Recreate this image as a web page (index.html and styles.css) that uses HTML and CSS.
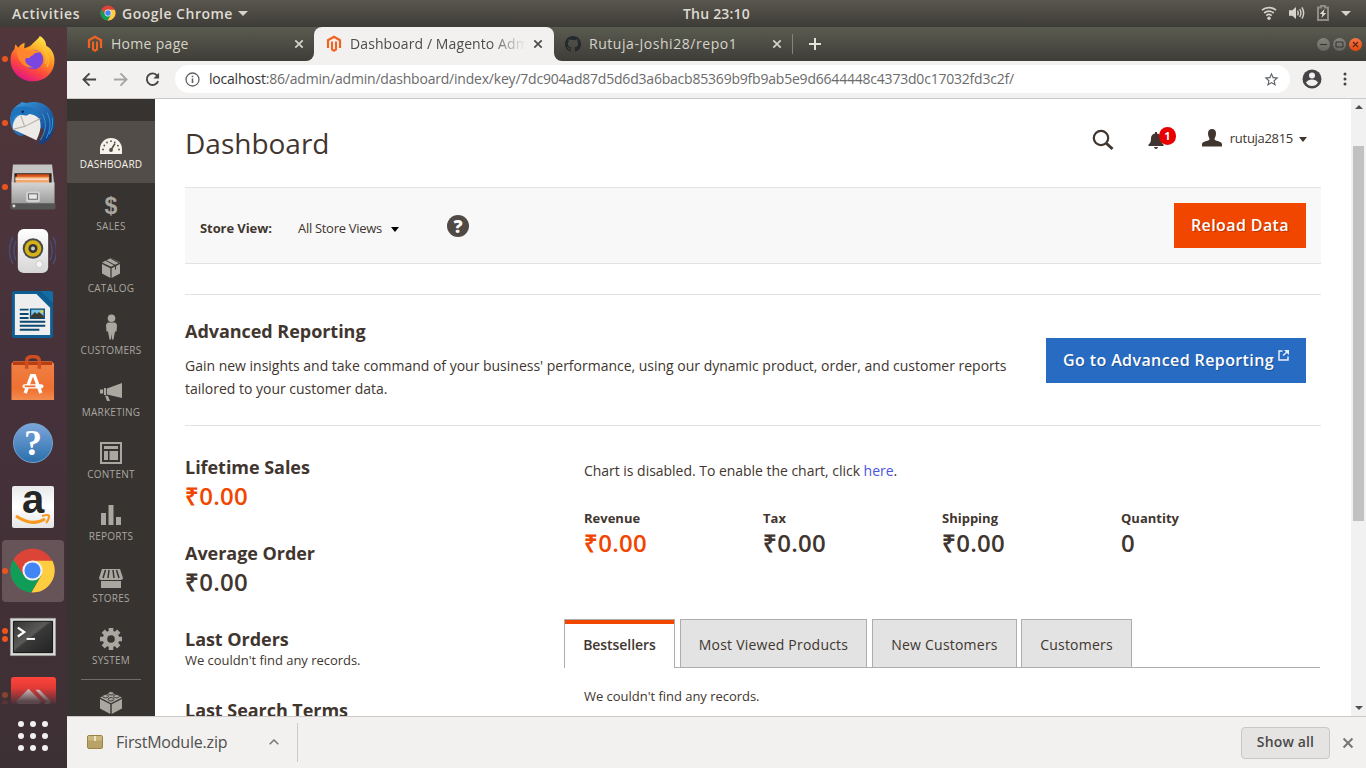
FILE: index.html
```html
<!DOCTYPE html>
<html lang="en">
<head>
<meta charset="utf-8">
<title>Dashboard / Magento Admin</title>
<link rel="stylesheet" href="styles.css">
</head>
<body>
<svg width="0" height="0" class="defs" aria-hidden="true">
  <defs>
    <symbol id="magento" viewBox="0 0 16 18"><path d="M2 13V5.2L8 1.8l6 3.4V13" fill="none" stroke="#f26322" stroke-width="2.2"/><path d="M6 6.500v8l2 1.200 2-1.200v-8" fill="none" stroke="#f26322" stroke-width="2.1"/></symbol>
    <symbol id="chrome" viewBox="0 0 48 48"><circle cx="24" cy="24" r="22.5" fill="#db4437"/><path d="M4.500 12.800A22.500 22.500 0 0 0 23 46.500L33 29 24 24 15 29Z" fill="#0f9d58"/><path d="M23 46.500A22.500 22.500 0 0 0 44.300 14H24l9 15Z" fill="#ffcd40"/><circle cx="24" cy="24" r="10.300" fill="#f1f1f1"/><circle cx="24" cy="24" r="8.200" fill="#4285f4"/></symbol>
    <symbol id="cross" viewBox="0 0 10 10"><path d="M1.300 1.300l7.400 7.400M8.700 1.300L1.300 8.700" stroke="currentColor" stroke-width="1.700"/></symbol>
    <linearGradient id="fox" x1=".8" y1="0" x2=".3" y2="1"><stop offset="0" stop-color="#fff44f"/><stop offset=".4" stop-color="#ff9a22"/><stop offset=".7" stop-color="#ff4a3c"/><stop offset="1" stop-color="#e0128a"/></linearGradient>
    <linearGradient id="bird" x1="0" y1="0" x2="1" y2="1"><stop offset="0" stop-color="#3aa0e4"/><stop offset="1" stop-color="#0c2f78"/></linearGradient>
    <linearGradient id="silver" x1="0" y1="0" x2="0" y2="1"><stop offset="0" stop-color="#d4d4d4"/><stop offset="1" stop-color="#9b9b9b"/></linearGradient>
    <linearGradient id="paper" x1="0" y1="0" x2="0" y2="1"><stop offset="0" stop-color="#fff"/><stop offset="1" stop-color="#d6d6d6"/></linearGradient>
    <linearGradient id="bag" x1="0" y1="0" x2="0" y2="1"><stop offset="0" stop-color="#ef8146"/><stop offset=".7" stop-color="#f0702f"/><stop offset="1" stop-color="#f38b50"/></linearGradient>
    <linearGradient id="screen" x1="0" y1="0" x2="1" y2="1"><stop offset="0" stop-color="#333"/><stop offset=".45" stop-color="#5a5a58"/><stop offset=".5" stop-color="#393939"/><stop offset="1" stop-color="#222"/></linearGradient>
    <linearGradient id="anyred" x1="0" y1="0" x2="0" y2="1"><stop offset="0" stop-color="#ff443c"/><stop offset=".25" stop-color="#e03a35"/><stop offset=".6" stop-color="#46323a"/><stop offset="1" stop-color="#46323a"/></linearGradient>
    <linearGradient id="anygrey" x1="0" y1="0" x2="0" y2="1"><stop offset="0" stop-color="#d5bcbc"/><stop offset=".75" stop-color="#5a474b"/></linearGradient>
  </defs>
</svg>

<header class="topbar">
  <span class="activities">Activities</span>
  <svg class="tb-chrome" viewBox="0 0 48 48"><use href="#chrome"/></svg>
  <span class="appname">Google Chrome</span>
  <i class="tri"></i>
  <span class="clock">Thu 23:10</span>
  <div class="indicators">
    <svg width="16" height="16" viewBox="0 0 16 16" fill="none" stroke="#d6d3cc"><path d="M1 5.200a10.500 10.500 0 0 1 14 0M3.200 8a7.300 7.300 0 0 1 9.600 0M5.300 10.600a4.200 4.200 0 0 1 5.400 0" stroke-width="1.700"/><circle cx="8" cy="13.300" r="1.700" fill="#d6d3cc" stroke="none"/></svg>
    <svg width="16" height="16" viewBox="0 0 16 16"><path d="M0 5.300h3.300L7 2v12l-3.700-3.300H0z" fill="#d6d3cc"/><path d="M8.500 5.600q1.500 2.400 0 4.800M10.700 4q2.500 4 0 8M12.900 2.300q3.600 5.700 0 11.400" fill="none" stroke="#d6d3cc" stroke-width="1.400"/></svg>
    <svg width="12" height="16" viewBox="0 0 12 16"><path d="M1 2.500h3V1h4v1.500h3V15H1z" fill="none" stroke="#8f8c85" stroke-width="2"/><path d="M7.500 4L2.800 9h2.600l-1 4 4.800-5H6.600z" fill="#dfdcd5"/></svg>
    <i class="tri"></i>
  </div>
</header>

<div class="desktop">
  <nav class="dock">
    <div class="dock-list">
      <div class="app"><i class="dot"></i>
        <svg viewBox="0 0 48 48"><path d="M31.500 1c5 2.800 6.300 6.700 6.500 10 6 3 9.200 9.500 8.300 17.500C45.200 39 36.500 47 25 47.200 12.500 47.400 2.200 38.500 1.600 26.500 1.300 20.500 3 17 5.500 14.500l1-5 3 3.500c2-3 4-4 6.500-5l-.5 5.500c5-1 7-2.500 9-5C27 6 30 4 31.500 1z" fill="url(#fox)"/><circle cx="25" cy="25" r="10" fill="#7b45e0"/><path d="M15 20c4-6 12-6 17-2-6-1-9 3-11 5-2 1-5 1-6-3z" fill="#ff9328"/><path d="M8 16c4-3 9-2 13 1 3 0 5 1 5 2-2 3-5 3-8 4-4 3 1 9 7 10-9 2-17-7-17-17z" fill="#ff862e"/><path d="M29 10c7 4 11 11 8 20M35 13q8 9 4 20" fill="none" stroke="#ffc537" stroke-width="1.500" opacity=".7"/></svg></div>
      <div class="app"><i class="dot"></i>
        <svg viewBox="0 0 48 48"><path d="M13 3l5 1c18-4 29 7 28.500 22C46 38 38 46 29 46.500c6-6 8-12 6-17L12 38C3 35 0 25 1.600 17 3 9 8 7 13 3z" fill="url(#bird)"/><path d="M4 31c-1-6 2-13 8-15 9-3 20 1 20 8 1 6-1 12-4 18z" fill="#edebe7"/><path d="M12 17l4 11 16-8M4 31l12-3" fill="none" stroke="#b9b3a8" stroke-width="1.200"/><path d="M2 18C2 7 11 7 19 8c7 1 11 5 13 11-4-3-7-5-11-4-4 4-8 0-13 1-3 1-4 5-5 9z" fill="#1e75bd"/><circle cx="14" cy="13" r="1.300" fill="#182454"/><path d="M34 15c5 10 4 17-2 27M39 14c4 9 4 16-1 26M44 19q2 9-3 17" stroke="#3698d4" stroke-width="1" fill="none"/></svg></div>
      <div class="app"><i class="dot"></i>
        <svg viewBox="0 0 48 48"><path d="M4 1.500h40l2 19H2.500z" fill="#c4c4c4"/><path d="M5.500 10.500h38v10h-38z" fill="#29231f"/><path d="M8 11.500h33v9H8z" fill="#d95219"/><path d="M6.500 14h34.500v7H6.500z" fill="#f4a56c"/><path d="M6.500 16.500H40" stroke="#fff" stroke-width="1"/><path d="M2.500 20h44v22h-44z" fill="url(#silver)"/><rect x="17.500" y="29" width="14" height="11" rx="2" fill="#d2d2d2"/><rect x="20" y="31.500" width="9" height="5.500" fill="#e8e8e8" stroke="#666" stroke-width="1"/><rect x="1.500" y="41" width="46" height="6.500" rx="2" fill="#555"/><circle cx="5" cy="44" r="1.500" fill="#ddd"/></svg></div>
      <div class="app">
        <svg viewBox="0 0 48 48"><path d="M4 10q-7 14 0 28M45 10q7 14 0 28M7 14q-4 10 0 20M42 14q4 10 0 20" fill="none" stroke="#4a4b70" stroke-width="1.600"/><rect x="9" y="2" width="31" height="45" rx="6" fill="url(#paper)"/><circle cx="24.500" cy="22" r="10.500" fill="#494949"/><circle cx="24.500" cy="22" r="8.500" fill="#d5b218"/><circle cx="24.500" cy="22" r="4.600" fill="#373737"/><circle cx="24.500" cy="22" r="2" fill="#ccc"/><circle cx="31" cy="38" r="3.500" fill="#f4f4f4" stroke="#ccc"/></svg></div>
      <div class="app">
        <svg viewBox="0 0 48 48"><path d="M5 0h27l13 13v33q0 2-2 2H5q-2 0-2-2V2q0-2 2-2z" fill="#0e5e93"/><path d="M6 3h22l14 14v28H6z" fill="#eee"/><path d="M32 0h11q2 0 2 2v11z" fill="#126da5"/><path d="M11 19h9M11 23.500h9M11 27.500h9M11 31.500h26M11 35.500h26M11 39.500h20" stroke="#0c4971" stroke-width="2"/><path d="M22 18.500h14v9.500H22z" fill="#78c5e8" stroke="#0c4971" stroke-width="1.400"/><path d="M22.500 27.500v-2l4-4 2 2 2-2 5 4v2z" fill="#3c3c34"/><circle cx="33.500" cy="21" r="1.600" fill="#e8cb35"/></svg></div>
      <div class="app">
        <svg viewBox="0 0 48 48"><path d="M2.500 9l2-2.500h39l2.500 2.500v37H2.500z" fill="url(#bag)"/><path d="M4 6.800h40v3.500H4z" fill="#b83e12"/><path d="M18 14V6q0-4.500 6.500-4.500T31 6v8" fill="none" stroke="#cf4d21" stroke-width="3.500"/><path d="M16.500 39l6.500-18h3l6.500 18" fill="none" stroke="#fff" stroke-width="3.400"/><path d="M16 32h17" stroke="#fff" stroke-width="4.400" stroke-linecap="round"/><path d="M16 32h11" stroke="#ef6e30" stroke-width="1.800"/></svg></div>
      <div class="app"><span class="help-ball">?</span></div>
      <div class="app"><span class="amazon">a<svg viewBox="0 0 36 12"><path d="M1 2q16 11 29 3" fill="none" stroke="#f8981d" stroke-width="3"/><path d="M27 2q7-2 7 0 0 4-3 7" fill="none" stroke="#f8981d" stroke-width="2"/></svg></span></div>
      <div class="app current"><i class="dot"></i><svg viewBox="0 0 48 48"><use href="#chrome"/></svg></div>
      <div class="app term"><i class="dot two"></i>
        <svg viewBox="0 0 48 48"><rect x="1" y="6" width="47" height="39" rx="1.500" fill="#d9d9d7"/><rect x="1.500" y="6.500" width="46" height="38" rx="1" fill="none" stroke="#989894"/><path d="M4.500 9.500h40v32h-40z" fill="url(#screen)" stroke="#111"/><path d="M9 16l6.500 4.500L9 25" fill="none" stroke="#fff" stroke-width="2.300"/><path d="M18 27.500h8.500" stroke="#fff" stroke-width="2"/></svg></div>
      <div class="app faded"><i class="dot"></i>
        <svg viewBox="0 0 48 48"><rect x="2" y="2" width="46" height="46" rx="3" fill="url(#anyred)"/><path d="M7 27L20 14l13 13-4 4H11z" fill="url(#anygrey)"/><path d="M27 15h4l12 12-3 4h-5l3-4z" fill="url(#anygrey)"/></svg></div>
    </div>
    <div class="apps-grid"><i></i><i></i><i></i><i></i><i></i><i></i><i></i><i></i><i></i></div>
  </nav>

  <div class="window">
    <div class="tabstrip">
      <div class="btab first"><svg class="fav" viewBox="0 0 16 18"><use href="#magento"/></svg><span class="t-home">Home page</span><svg class="x"><use href="#cross"/></svg></div>
      <div class="active-wrap"><div class="btab active"><svg class="fav" viewBox="0 0 16 18"><use href="#magento"/></svg><span class="t-dash">Dashboard / Magento Adm</span><svg class="x"><use href="#cross"/></svg></div></div>
      <div class="btab rest">
        <svg class="gh" viewBox="0 0 16 16"><path fill="#24292e" d="M8 0C3.580 0 0 3.580 0 8c0 3.540 2.290 6.530 5.470 7.590.400.070.550-.170.550-.380v-1.490c-2.010.370-2.530-.490-2.690-.940-.090-.230-.480-.940-.820-1.130-.280-.150-.680-.520-.010-.530.630-.010 1.080.580 1.230.820.720 1.210 1.870.870 2.330.660.070-.520.280-.870.510-1.070-1.780-.200-3.640-.890-3.640-3.950 0-.870.310-1.590.820-2.150-.080-.200-.360-1.020.080-2.120 0 0 .670-.210 2.200.820a7.600 7.600 0 0 1 4 0c1.530-1.040 2.200-.820 2.200-.820.440 1.100.160 1.920.080 2.120.510.560.820 1.270.820 2.150 0 3.070-1.870 3.750-3.650 3.950.290.250.540.730.540 1.480v2.190c0 .210.150.460.550.380A8 8 0 0 0 16 8c0-4.420-3.580-8-8-8z"/></svg>
        <span class="t-repo">Rutuja-Joshi28/repo1</span><svg class="x"><use href="#cross"/></svg><i class="tabsep"></i>
        <svg class="plus" viewBox="0 0 12 12"><path d="M6 0v12M0 6h12" stroke="#e4e2da" stroke-width="2"/></svg>
        <div class="winbtns"><i><svg viewBox="0 0 13 13"><path d="M3 6.500h7" stroke="#35352f"/></svg></i><i><svg viewBox="0 0 13 13"><path d="M3 4h7v5H3z" fill="none" stroke="#35352f"/></svg></i><i class="close"><svg viewBox="0 0 13 13"><path d="M4 4l5 5M9 4L4 9" stroke="#5a2a10" stroke-width="1.200"/></svg></i></div>
      </div>
    </div>

    <div class="toolbar">
      <svg class="nav-i" viewBox="0 0 16 16"><path d="M15 8H2M8 1.500L1.500 8 8 14.500" fill="none" stroke="#454545" stroke-width="1.900"/></svg>
      <svg class="nav-i fwd" viewBox="0 0 16 16"><path d="M1 8h13M8 1.500L14.500 8 8 14.500" fill="none" stroke="#a5a4a3" stroke-width="1.900"/></svg>
      <svg class="nav-i reload" viewBox="0 0 16 16"><path d="M13 3.800A6.200 6.200 0 1 0 14 9.800" fill="none" stroke="#454545" stroke-width="2"/><path d="M15 .8v6H9z" fill="#454545"/></svg>
      <div class="omnibox">
        <svg class="info" viewBox="0 0 15 15"><circle cx="7.500" cy="7.500" r="6.500" fill="none" stroke="#5f6368" stroke-width="1.300"/><path d="M7.500 6.500v4.500M7.500 3.700v1.600" stroke="#5f6368" stroke-width="1.600"/></svg>
        <span class="url"><b>localhost</b>:86/admin/admin/dashboard/index/key/7dc904ad87d5d6d3a6bacb85369b9fb9ab5e9d6644448c4373d0c17032fd3c2f/</span>
        <svg class="star" viewBox="0 0 24 24"><path fill="#5f6368" d="M22 9.240l-7.190-.620L12 2 9.190 8.630 2 9.240l5.460 4.730L5.820 21 12 17.270 18.180 21l-1.630-7.030L22 9.240zM12 15.400l-3.760 2.270 1-4.280-3.320-2.880 4.380-.380L12 6.100l1.710 4.040 4.380.380-3.320 2.880 1 4.280L12 15.400z"/></svg>
      </div>
      <svg class="profile" viewBox="0 0 20 20"><circle cx="10" cy="10" r="9.500" fill="#454547"/><circle cx="10" cy="6.600" r="3" fill="#f2f1f0"/><path d="M4 13.500q2-3 6-3t6 3q-2 3.500-6 3.500t-6-3.500z" fill="#f2f1f0"/></svg>
      <svg class="kebab" viewBox="0 0 4 14"><circle cx="2" cy="2" r="1.500"/><circle cx="2" cy="7" r="1.500"/><circle cx="2" cy="12" r="1.500"/></svg>
    </div>

    <div class="viewport">
      <aside class="menu">
        <a class="item on"><svg viewBox="0 0 22 16"><path d="M0 16V11A11 11 0 0 1 22 11V16z" fill="currentColor"/><g fill="#524d49"><circle cx="3" cy="11.500" r=".9"/><circle cx="4.300" cy="7.500" r=".9"/><circle cx="7" cy="4.500" r=".9"/><circle cx="11" cy="3.200" r=".9"/><circle cx="14.800" cy="4.300" r=".9"/><circle cx="19" cy="11.500" r=".9"/><circle cx="17.900" cy="7.700" r=".9"/><circle cx="11" cy="12" r="1.900"/></g><path d="M11 12l4-6.500" stroke="#524d49" stroke-width="1.500"/></svg><span>DASHBOARD</span></a>
        <a class="item"><b class="dollar">$</b><span>SALES</span></a>
        <a class="item"><svg viewBox="0 0 24 24"><g fill="currentColor"><path d="M12 3l9 4.500-9 4.300L3 7.500z"/><path d="M3 9l8.400 4.200V23L3 18.500zM21 9l-8.400 4.200V23l8.400-4.500z"/></g><path d="M7 5.500l9.500 5v4M11.500 3.200l9 5" stroke="#373330" fill="none" stroke-width="1"/></svg><span>CATALOG</span></a>
        <a class="item tall"><svg viewBox="0 0 24 26"><g fill="currentColor"><circle cx="12.500" cy="4.300" r="3.800"/><path d="M9 8.500h7q2 1 2 3l-.5 6H16l-1.500 8H13l-.5-6-.5 6h-1.500l-1.500-8H7.500l-.5-6q0-2 2-3z"/></g></svg><span>CUSTOMERS</span></a>
        <a class="item horn"><svg viewBox="0 0 24 20"><g fill="currentColor"><path d="M8 6.500L23 1v15L8 12.500zM5 6h2.200v7H5zM1 7.500h3.200v4H1zM6 13.500l3 .5 2 5H8z"/></g></svg><span>MARKETING</span></a>
        <a class="item"><svg viewBox="0 0 24 24"><path d="M2 2h20v20H2z" fill="none" stroke="currentColor" stroke-width="2"/><path d="M5 5h14v3H5zM5 10h4v9H5zM10.500 10H19v9h-8.500z" fill="currentColor"/></svg><span>CONTENT</span></a>
        <a class="item"><svg viewBox="0 0 24 24"><path d="M2 10h5v12H2zM9.500 2h5v20h-5zM17 14h5v8h-5z" fill="currentColor"/></svg><span>REPORTS</span></a>
        <a class="item shop"><svg viewBox="0 0 24 22"><g fill="currentColor"><path d="M3 1h18l3 9q0 2-2.500 2H2.500Q0 12 0 10z"/><path d="M2 13h20v7H2z"/></g><path d="M6.500 2L4 10M10 2L9 10M14 2l1 8M17.500 2L20 10" stroke="#373330" stroke-width="1.500"/></svg><span>STORES</span></a>
        <a class="item"><svg viewBox="0 0 24 24"><g stroke="currentColor" stroke-width="4.600"><path d="M12 1v22M1 12h22M4.200 4.200l15.600 15.600M19.800 4.200L4.200 19.800"/></g><circle cx="12" cy="12" r="8.300" fill="currentColor"/><circle cx="12" cy="12" r="3.800" fill="#373330"/></svg><span>SYSTEM</span></a>
        <hr>
        <a class="item last"><svg viewBox="0 0 24 24"><g fill="currentColor"><path d="M1 7.500L12 2l11 5.500-11 5.700zM1 9l10.300 5.300V24L1 18.500zM23 9l-10.300 5.300V24L23 18.500z"/></g><g fill="#aaa6a0" stroke="#373330" stroke-width=".9"><ellipse cx="12" cy="3.300" rx="2.900" ry="1.700"/><ellipse cx="6.500" cy="6.200" rx="2.900" ry="1.700"/><ellipse cx="17.500" cy="6.200" rx="2.900" ry="1.700"/><ellipse cx="12" cy="9.300" rx="2.900" ry="1.700"/></g></svg></a>
      </aside>

      <main class="page">
        <div class="page-head">
          <h1>Dashboard</h1>
          <svg class="search" viewBox="0 0 22 22"><circle cx="9" cy="9" r="7.200" fill="none" stroke="#41362f" stroke-width="2.200"/><path d="M14 14l6.500 6" stroke="#41362f" stroke-width="3"/></svg>
          <div class="bell"><svg viewBox="0 0 16 17"><path d="M7 0h2v1.500q4 .8 4 5 0 4.500 2.500 6V14H.5v-1.500Q3 11 3 6.500q0-4.200 4-5zM6 15h4q-.5 2-2 2t-2-2z" fill="#41362f"/></svg><em>1</em></div>
          <svg class="user" viewBox="0 0 20 18"><path d="M10 0q4 0 4 4.500c0 3-1.500 4-1.500 6 2 2 7.500 1.500 7.500 5V17.500H0V15.500c0-3.500 5.500-3 7.500-5 0-2-1.500-3-1.500-6Q6 0 10 0z" fill="#41362f"/></svg>
          <span class="uname">rutuja2815</span><i class="caret"></i>
        </div>

        <div class="storebar">
          <strong>Store View:</strong><span class="scope">All Store Views</span><i class="caret black"></i><span class="qmark">?</span>
          <button class="btn reload-btn">Reload Data</button>
        </div>

        <section class="adv">
          <div class="adv-text"><h2>Advanced Reporting</h2><p>Gain new insights and take command of your business' performance, using our dynamic product, order, and customer reports tailored to your customer data.</p></div>
          <button class="btn blue">Go to Advanced Reporting<svg viewBox="0 0 11 11"><path d="M4.500 1H1v9h9V6.500M5 5.500L9 2" fill="none" stroke="#e8f0fa" stroke-width="1.500"/><path d="M6 0h5v5z" fill="#e8f0fa"/></svg></button>
        </section>

        <div class="columns">
          <div class="left">
            <div class="stat"><h2>Lifetime Sales</h2><p class="price hot">₹0.00</p></div>
            <div class="stat"><h2>Average Order</h2><p class="price">₹0.00</p></div>
            <div class="stat orders"><h2>Last Orders</h2><p class="none">We couldn't find any records.</p></div>
            <div class="stat"><h2>Last Search Terms</h2></div>
          </div>
          <div class="right">
            <p class="chart">Chart is disabled. To enable the chart, click <a>here</a>.</p>
            <div class="totals">
              <div><b>Revenue</b><p class="price hot">₹0.00</p></div>
              <div><b>Tax</b><p class="price">₹0.00</p></div>
              <div><b>Shipping</b><p class="price">₹0.00</p></div>
              <div><b>Quantity</b><p class="price">0</p></div>
            </div>
            <div class="tabs"><a class="tab sel">Bestsellers</a><a class="tab w2">Most Viewed Products</a><a class="tab w3">New Customers</a><a class="tab w4">Customers</a></div>
            <p class="none tabbody">We couldn't find any records.</p>
          </div>
        </div>
      </main>

      <div class="scroll"><i class="up"></i><i class="thumb"></i><i class="down"></i></div>
    </div>

    <footer class="downloads">
      <svg class="zip" viewBox="0 0 16 14"><rect x=".5" y=".5" width="15" height="13" rx="1.500" fill="#b8a268" stroke="#9a8349"/><path d="M1 1h14v4.500H1z" fill="#cbb67d"/><path d="M7 1h2v5H7z" fill="#eee3c3"/></svg>
      <span class="fname">FirstModule.zip</span>
      <svg class="chev" viewBox="0 0 10 6"><path d="M.7 5.300L5 1l4.300 4.300" fill="none" stroke="#777" stroke-width="1.500"/></svg>
      <i class="dsep"></i>
      <button class="showall">Show all</button>
      <svg class="dx" viewBox="0 0 10 10"><use href="#cross"/></svg>
    </footer>
  </div>
</div>
</body>
</html>
```
FILE: styles.css
```css
* { box-sizing: border-box; }
body { margin: 0; width: 1366px; height: 768px; overflow: hidden; display: flex; flex-direction: column; font-family: "Open Sans", sans-serif; color: #41362f; background: #fff; }
h1, h2, p { margin: 0; }
svg { display: block; flex: none; }
i { flex: none; display: block; }
.defs { position: absolute; }

/* top panel */
.topbar { height: 27px; flex: none; display: flex; align-items: center; background: linear-gradient(#59564e, #3e3c37); color: #dfdbd2; font-size: 14px; font-weight: 600; white-space: nowrap; position: relative; padding: 0 0 1px 12px; }
.activities { width: 68px; letter-spacing: .7px; }
.tb-chrome { width: 16px; height: 16px; margin: 0 6px 0 20px; }
.appname { width: 112px; letter-spacing: .5px; }
.tri { width: 0; height: 0; border: 5px solid transparent; border-top-color: #d6d3cc; border-bottom: 0; margin-left: 4px; }
.clock { position: absolute; left: 683px; letter-spacing: .2px; }
.indicators { margin-left: auto; display: flex; align-items: center; gap: 12px; padding-right: 15px; }
.indicators .tri { margin-left: 0; }

.desktop { flex: 1; display: flex; min-height: 0; }

/* dock */
.dock { width: 67px; flex: none; background: linear-gradient(#51373b, #46313a 50%, #3d3034); display: flex; flex-direction: column; }
.dock-list { height: 677px; overflow: hidden; }
.app { height: 64px; display: flex; align-items: center; justify-content: center; position: relative; padding-right: 1px; }
.app > svg { width: 47px; height: 47px; margin: -1px 0 0 -2px; }
.dot { position: absolute; left: 2px; top: 29px; width: 6px; height: 6px; border-radius: 50%; background: #e95420; }
.dot.two { top: 25px; box-shadow: 0 8px #e95420; }
.term > svg { margin-top: 1px; }
.faded .dot { background: #87432f; top: 25px; box-shadow: 0 8px #583437; }
.app.current::before { content: ""; position: absolute; left: 2px; top: 1px; width: 62px; height: 62px; background: #675459; border-radius: 4px; }
.app.current svg, .app.current .dot { z-index: 1; }
.help-ball { width: 40px; height: 40px; border-radius: 50%; background: linear-gradient(#7ba5db, #2c70ac); border: 1px solid #78a4cf; color: #fff; font: bold 36px/39px "Liberation Serif", serif; text-align: center; }
.amazon { width: 42px; height: 42px; border-radius: 2px; background: linear-gradient(#e9e9e9, #fff 50%, #e5e5e5); color: #262626; font: bold 40px/27px "Liberation Sans", sans-serif; text-align: center; }
.amazon svg { width: 36px; height: 12px; margin: 1px 0 0 3px; }
.apps-grid { display: grid; grid-template-columns: repeat(3, 6px); gap: 6px; padding: 17px 0 0 18px; }
.apps-grid i { width: 6px; height: 6px; border-radius: 50%; background: #f2f1ef; }

/* browser tab strip */
.window { flex: 1; display: flex; flex-direction: column; min-width: 0; }
.tabstrip { height: 34px; flex: none; display: flex; background: #f2f1f0; font-size: 14px; }
.btab { height: 34px; display: flex; align-items: center; color: #d6d3c9; white-space: nowrap; background: linear-gradient(#5a5b50, #3e3d38); }
.btab span { margin-top: -2px; }
.btab.first { width: 247px; border-radius: 0 0 8px 0; padding: 0 10px 0 20px; }
.active-wrap { width: 240px; background: linear-gradient(#595a4f 12px, #f2f1f0 12px); }
.btab.active { background: #f2f1f0; color: #4c4c4c; border-radius: 8px 8px 0 0; padding: 0 11px 0 12px; }
.btab.rest { flex: 1; border-radius: 0 0 0 8px; padding-left: 11px; }
.fav { width: 16px; height: 18px; margin-right: 8px; }
.x { width: 10px; height: 10px; }
.t-home { letter-spacing: .3px; }
.first .x, .active .x { margin-left: auto; }
.t-dash { width: 177px; overflow: hidden; letter-spacing: .1px; -webkit-mask-image: linear-gradient(90deg, #000 140px, transparent 176px); mask-image: linear-gradient(90deg, #000 140px, transparent 176px); }
.gh { width: 16px; height: 16px; margin-right: 8px; }
.t-repo { width: 183px; letter-spacing: .55px; }
.tabsep { width: 1px; height: 20px; background: #85847a; margin: 0 16px 0 10px; }
.plus { width: 12px; height: 12px; }
.winbtns { margin-left: auto; display: flex; gap: 3px; padding-right: 4px; }
.winbtns i { width: 13px; height: 13px; border-radius: 50%; background: linear-gradient(#85847c, #65645d); }
.winbtns .close { background: linear-gradient(#f4764b, #e8470c); }

/* toolbar */
.toolbar { height: 38px; flex: none; background: #f2f1f0; border-bottom: 1px solid #cbcac9; display: flex; align-items: center; padding-left: 15px; }
.nav-i { width: 15px; height: 15px; margin-top: -1px; }
.fwd { margin-left: 16px; }
.reload { margin-left: 17px; }
.omnibox { height: 28px; width: 1115px; margin-left: 15px; margin-top: -1px; background: #fff; border-radius: 14px; display: flex; align-items: center; padding: 0 10px; }
.info { width: 15px; height: 15px; }
.url { margin: -2px 0 0 9px; font-size: 14px; color: #6b6b6b; white-space: nowrap; letter-spacing: -.21px; }
.url b { font-weight: 400; color: #333; }
.star { width: 17px; height: 17px; margin-left: auto; }
.profile { width: 20px; height: 20px; margin: -1px 0 0 12px; }
.kebab { width: 4px; height: 14px; margin: -1px 0 0 21px; fill: #454545; }

/* viewport */
.viewport { height: 617px; flex: none; display: flex; overflow: hidden; }
.menu { width: 88px; flex: none; background: #373330; padding-top: 22px; color: #aaa6a0; }
.item { height: 62px; display: flex; flex-direction: column; align-items: center; font-size: 10px; letter-spacing: .25px; line-height: 14px; }
.item svg { width: 24px; height: 24px; margin: 10px 0 0; }
.item span { margin-top: auto; margin-bottom: 12px; }
.item.on { background: #524d49; color: #f7f3eb; }
.item.on svg { width: 22px; height: 16px; margin-top: 17px; }
.item.tall svg { height: 26px; margin-top: 7px; }
.item.horn svg { height: 20px; margin-top: 13px; }
.item.shop svg { height: 22px; margin-top: 13px; }
.dollar { font: bold 23px/26px "Liberation Sans", sans-serif; margin-top: 10px; }
.menu hr { width: 60px; margin: 0 auto; border: 0; border-top: 1px solid #6f6b67; }
.item.last svg { margin-top: 10px; }

.page { flex: 1; padding: 0 30px; min-width: 0; }
.page-head { height: 88px; display: flex; align-items: flex-start; }
h1 { font-size: 28px; font-weight: 400; line-height: 38px; padding-top: 25px; flex: 1; }
.search { width: 22px; height: 22px; margin: 30px 34px 0 0; }
.bell { position: relative; width: 54px; padding-top: 33px; }
.bell svg { width: 16px; height: 17px; }
.bell em { position: absolute; left: 11px; top: 28px; width: 17px; height: 18px; border-radius: 9px; background: #e80000; color: #fff; font: 700 11px/17px "Open Sans", sans-serif; text-align: center; }
.user { width: 20px; height: 18px; margin-top: 30px; }
.uname { font-size: 13px; line-height: 18px; margin: 30px 0 0 8px; letter-spacing: -.3px; }
.caret { width: 0; height: 0; border: 4.500px solid transparent; border-top: 5px solid #41362f; border-bottom: 0; margin: 38px 14px 0 6px; }

.storebar { height: 77px; border: solid #e3e3e3; border-width: 1px 0; background: #f8f8f8; display: flex; align-items: center; padding: 0 15px; font-size: 13px; white-space: nowrap; }
.storebar strong { width: 98px; padding-top: 5px; letter-spacing: -.08px; }
.scope { padding-top: 5px; width: 84px; letter-spacing: -.3px; }
.caret.black { border-top-color: #000; margin: 7px 0 0 9px; }
.qmark { width: 22px; height: 22px; border-radius: 50%; background: #514943; color: #f8f8f8; font-weight: 800; font-size: 18px; line-height: 22px; text-align: center; margin-left: 48px; }
.btn { border: 0; height: 45px; color: #fff; font: 600 16px "Open Sans", sans-serif; letter-spacing: .4px; text-shadow: 1px 1px 0 rgba(0, 0, 0, .25); padding: 0 0 2px; white-space: nowrap; }
.reload-btn { width: 132px; background: #f14600; margin-left: auto; }

.adv { height: 132px; margin-top: 30px; border: solid #e3e3e3; border-width: 1px 0; display: flex; padding-right: 15px; }
h2 { font-size: 18px; font-weight: 700; line-height: 24px; letter-spacing: -.04px; }
.adv-text { width: 861px; padding: 24px 30px 0 0; }
.adv-text p { font-size: 14px; line-height: 23px; margin-top: 11px; letter-spacing: -.01px; }
.blue { width: 260px; background: #286bc2; margin-top: 43px; display: flex; justify-content: center; align-items: center; }
.blue svg { width: 11px; height: 11px; margin: -9px 0 0 4px; }

.columns { display: flex; }
.left { width: 379px; padding-top: 29px; }
.stat { height: 86px; }
.stat.orders { height: 71px; }
.price { font-size: 24px; line-height: 30px; font-weight: 600; margin-top: 2px; letter-spacing: .25px; }
.hot { color: #f14600; }
.none { font-size: 13px; line-height: 18px; letter-spacing: -.03px; }
.right { width: 756px; padding-top: 33px; }
.chart { font-size: 14px; line-height: 24px; padding-left: 20px; letter-spacing: -.03px; }
.chart a { color: #4a54e0; }
.totals { display: grid; grid-template-columns: repeat(4, 179px); padding-left: 20px; margin-top: 27px; height: 108px; }
.totals b { display: block; font-size: 13px; line-height: 16px; }
.totals .price { margin-top: 2px; }
.tabs { display: flex; height: 49px; margin-top: 1px; border-bottom: 1px solid #adadad; font-size: 14px; letter-spacing: .22px; }
.tab { height: 48px; border: 1px solid #adadad; border-bottom: 0; background: #e3e3e3; line-height: 49px; text-align: center; white-space: nowrap; }
.tab.sel { width: 111px; height: 49px; background: #fff; font-weight: 600; box-shadow: inset 0 4px #f14600; letter-spacing: -.05px; }
.w2 { width: 187px; margin-left: 5px; }
.w3 { width: 145px; margin-left: 5px; }
.w4 { width: 111px; margin-left: 4px; }
.tabbody { padding: 19px 0 0 20px; }

.scroll { width: 15px; flex: none; background: #f1f1f1; display: flex; flex-direction: column; align-items: center; }
.up, .down { width: 0; height: 0; border: 4px solid transparent; }
.up { border-top: 0; border-bottom-color: #505050; margin-top: 6px; }
.thumb { width: 11px; height: 375px; background: #c1c1c1; margin-top: 37px; }
.down { border-bottom: 0; border-top-color: #505050; margin-top: auto; margin-bottom: 6px; }

/* downloads shelf */
.downloads { height: 52px; background: #f2f1f0; border-top: 1px solid #cbcac9; display: flex; align-items: center; padding-left: 20px; }
.zip { width: 16px; height: 14px; margin-top: -2px; }
.fname { width: 112px; margin: -2px 0 0 13px; font-size: 16px; color: #50504f; white-space: nowrap; letter-spacing: -.2px; }
.chev { width: 10px; height: 6px; margin: -1px 0 0 41px; }
.dsep { width: 1px; height: 39px; background: #cbcac9; margin-left: 18px; }
.showall { margin-left: auto; width: 89px; height: 32px; border: 1px solid #c9c8c6; border-radius: 4px; background: #e5e4e2; color: #4a4a48; font: 600 14px "Open Sans", sans-serif; letter-spacing: .15px; padding: 0 0 2px; }
.dx { width: 12px; height: 12px; color: #777; margin: 0 12px; }
```
